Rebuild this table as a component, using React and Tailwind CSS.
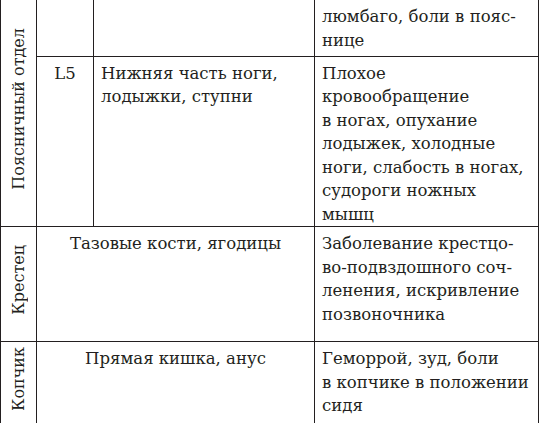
import React from 'react';

const cell = 'border border-[#231f20] align-top px-[7px] pt-[5px] leading-[23.5px]';

const Vertical = ({ children }) => (
  <span className="inline-block [writing-mode:vertical-rl] rotate-180 whitespace-nowrap leading-[20px] text-[16px]">
    {children}
  </span>
);

export default function App() {
  return (
    <div className="w-[539px] h-[423px] overflow-hidden bg-white text-[#231f20] font-['DejaVu_Serif',serif] text-[16.5px]">
      <table className="table-fixed border-collapse w-[538px]">
        <colgroup>
          <col className="w-[36px]" />
          <col className="w-[57px]" />
          <col className="w-[221px]" />
          <col className="w-[224px]" />
        </colgroup>
        <tbody>
          {/* Поясничный отдел */}
          <tr className="h-[56px]">
            <td rowSpan={2} className="border border-t-0 border-[#231f20] align-middle text-center p-0">
              <Vertical>Поясничный отдел</Vertical>
            </td>
            <td className="border border-t-0 border-[#231f20]" />
            <td className="border border-t-0 border-[#231f20]" />
            <td className={`${cell} border-t-0 whitespace-nowrap`}>
              люмбаго, боли в пояс-
              <br />
              нице
            </td>
          </tr>
          <tr className="h-[168px]">
            <td className={`${cell} text-center`}>L5</td>
            <td className={`${cell} whitespace-nowrap`}>
              Нижняя часть ноги,
              <br />
              лодыжки, ступни
            </td>
            <td className={`${cell} whitespace-nowrap`}>
              Плохое
              <br />
              кровообращение
              <br />
              в ногах, опухание
              <br />
              лодыжек, холодные
              <br />
              ноги, слабость в ногах,
              <br />
              судороги ножных
              <br />
              мышц
            </td>
          </tr>

          {/* Крестец */}
          <tr className="h-[115px]">
            <td className="border border-[#231f20] align-middle text-center p-0">
              <Vertical>Крестец</Vertical>
            </td>
            <td colSpan={2} className={`${cell} text-center`}>
              Тазовые кости, ягодицы
            </td>
            <td className={`${cell} whitespace-nowrap`}>
              Заболевание крестцо-
              <br />
              во-подвздошного соч-
              <br />
              ленения, искривление
              <br />
              позвоночника
            </td>
          </tr>

          {/* Копчик */}
          <tr className="h-[83px]">
            <td className="border border-[#231f20] align-middle text-center p-0">
              <Vertical>Копчик</Vertical>
            </td>
            <td colSpan={2} className={`${cell} text-center`}>
              Прямая кишка, анус
            </td>
            <td className={`${cell} whitespace-nowrap`}>
              Геморрой, зуд, боли
              <br />
              в копчике в положении
              <br />
              сидя
            </td>
          </tr>
        </tbody>
      </table>
    </div>
  );
}
